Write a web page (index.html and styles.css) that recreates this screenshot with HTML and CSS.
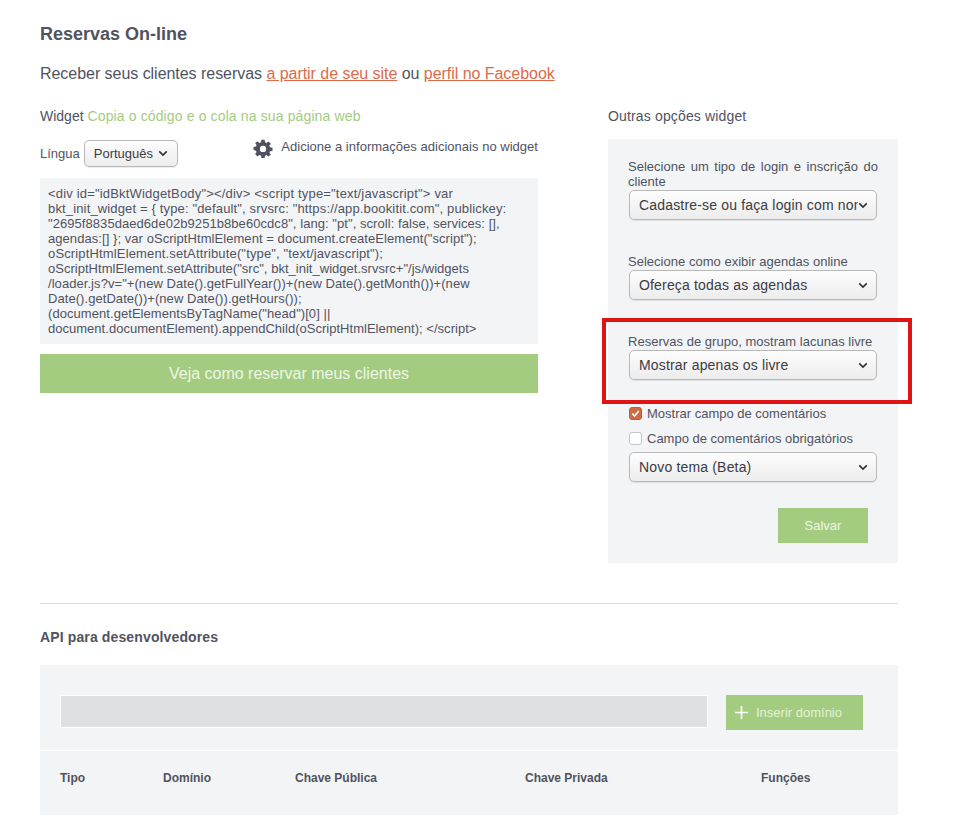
FILE: index.html
```html
<!DOCTYPE html>
<html lang="pt">
<head>
<meta charset="utf-8">
<title>Reservas On-line</title>
<link rel="stylesheet" href="styles.css">
</head>
<body>
<main class="page">
  <h1 class="title">Reservas On-line</h1>
  <p class="lead">Receber seus clientes reservas <a href="#">a partir de seu site</a> ou <a href="#">perfil no Facebook</a></p>
  <div class="columns">
    <section class="left">
      <div class="heading">Widget <span class="hint">Copia o código e o cola na sua página web</span></div>
      <div class="lang-row">
        <div class="lang">
          <span class="lang-label">Língua</span>
          <div class="select select-small"><span class="select-text">Português</span><svg class="chev" viewBox="0 0 12 8"><path d="M1.500 1.500 6 6l4.500-4.500" fill="none" stroke="#333" stroke-width="2"/></svg></div>
        </div>
        <div class="extra">
          <svg class="gear" viewBox="0 0 24 24"><path fill="#50535f" fill-rule="evenodd" d="M10 1h4l.6 3.100 1.800.8L19 3.100 21.900 6l-1.800 2.600.8 1.800L24 11v4l-3.100.6-.8 1.800 1.800 2.600L19 22l-2.600-1.800-1.800.8L14 24h-4l-.6-3.100-1.800-.8L5 22l-2.900-2.900 1.800-2.600-.8-1.800L0 14v-4l3.100-.6.8-1.800L2.100 5 5 3.100l2.600 1.800 1.800-.8zM12 8.500a4 4 0 1 0 0 8 4 4 0 0 0 0-8z"/></svg>
          <span class="extra-text">Adicione a informações adicionais no widget</span>
        </div>
      </div>
      <div class="code">
        <span class="line wider">&lt;div id="idBktWidgetBody"&gt;&lt;/div&gt; &lt;script type="text/javascript"&gt; var</span>
        <span class="line wide">bkt_init_widget = { type: "default", srvsrc: "https://app.bookitit.com", publickey:</span>
        <span class="line">"2695f8835daed6de02b9251b8be60cdc8", lang: "pt", scroll: false, services: [],</span>
        <span class="line">agendas:[] }; var oScriptHtmlElement = document.createElement("script");</span>
        <span class="line wide">oScriptHtmlElement.setAttribute("type", "text/javascript");</span>
        <span class="line tight">oScriptHtmlElement.setAttribute("src", bkt_init_widget.srvsrc+"/js/widgets</span>
        <span class="line">/loader.js?v="+(new Date().getFullYear())+(new Date().getMonth())+(new</span>
        <span class="line">Date().getDate())+(new Date()).getHours());</span>
        <span class="line">(document.getElementsByTagName("head")[0] ||</span>
        <span class="line tight">document.documentElement).appendChild(oScriptHtmlElement); &lt;/script&gt;</span>
      </div>
      <a class="preview" href="#">Veja como reservar meus clientes</a>
    </section>
    <aside class="right">
      <div class="heading heading-wide">Outras opções widget</div>
      <div class="panel">
        <div class="field">
          <label class="label justified">Selecione um tipo de login e inscrição do cliente</label>
          <div class="select"><span class="select-text">Cadastre-se ou faça login com nome</span><svg class="chev" viewBox="0 0 12 8"><path d="M1.500 1.500 6 6l4.500-4.500" fill="none" stroke="#333" stroke-width="2"/></svg></div>
        </div>
        <div class="field">
          <label class="label">Selecione como exibir agendas online</label>
          <div class="select"><span class="select-text">Ofereça todas as agendas</span><svg class="chev" viewBox="0 0 12 8"><path d="M1.500 1.500 6 6l4.500-4.500" fill="none" stroke="#333" stroke-width="2"/></svg></div>
        </div>
        <div class="field highlighted">
          <label class="label">Reservas de grupo, mostram lacunas livre</label>
          <div class="select"><span class="select-text">Mostrar apenas os livre</span><svg class="chev" viewBox="0 0 12 8"><path d="M1.500 1.500 6 6l4.500-4.500" fill="none" stroke="#333" stroke-width="2"/></svg></div>
        </div>
        <div class="check"><span class="box box-on"><svg viewBox="0 0 12 12"><path d="M2.500 6.200 5 8.700l4.500-5.400" fill="none" stroke="#fff" stroke-width="1.800"/></svg></span>Mostrar campo de comentários</div>
        <div class="check check-last"><span class="box"></span>Campo de comentários obrigatórios</div>
        <div class="select"><span class="select-text">Novo tema (Beta)</span><svg class="chev" viewBox="0 0 12 8"><path d="M1.500 1.500 6 6l4.500-4.500" fill="none" stroke="#333" stroke-width="2"/></svg></div>
        <div class="save-row"><a class="save" href="#">Salvar</a></div>
      </div>
    </aside>
  </div>
  <hr class="rule">
  <h2 class="api-title">API para desenvolvedores</h2>
  <section class="api">
    <div class="api-form">
      <div class="domain-input"></div>
      <a class="add" href="#"><svg class="plus" viewBox="0 0 16 16"><path d="M8 1v14M1 8h14" stroke="#fff" stroke-width="1.800" fill="none"/></svg>Inserir domínio</a>
    </div>
    <div class="api-head">
      <span class="col-type">Tipo</span>
      <span class="col-domain">Domínio</span>
      <span class="col-public">Chave Pública</span>
      <span class="col-private">Chave Privada</span>
      <span>Funções</span>
    </div>
  </section>
</main>
</body>
</html>
```
FILE: styles.css
```css
* { box-sizing: border-box; }
html, body { margin: 0; background: #fff; }
body { font-family: "Liberation Sans", Arial, sans-serif; color: #50535f; overflow: hidden; height: 836px; }
.page { width: 858px; margin-left: 40px; padding-top: 24px; }
.title { margin: 0; font-size: 18px; line-height: 20px; font-weight: bold; color: #50535f; }
.lead { margin: 20px 0 0; font-size: 16px; line-height: 20px; letter-spacing: -.04px; }
.lead a { color: #dd6a4a; text-decoration: underline; }
.columns { display: flex; justify-content: space-between; margin-top: 22px; }
.left { width: 498px; }
.right { width: 290px; }
.heading { font-size: 14px; line-height: 20px; color: #50535f; }
.heading-wide { letter-spacing: .15px; }
.hint { color: #a3cc80; letter-spacing: .13px; }
.lang-row { display: flex; justify-content: space-between; align-items: flex-start; margin-top: 14px; height: 38px; }
.lang { display: flex; align-items: center; font-size: 13px; gap: 4px; }
.lang-label { font-size: 13px; }
.extra { display: flex; align-items: center; font-size: 13px; gap: 8px; line-height: 16px; margin-top: -1px; }
.extra-text { margin-top: -4px; letter-spacing: .02px; }
.gear { width: 20px; height: 19px; }
.select { display: flex; align-items: center; justify-content: space-between; height: 30px; width: 248px; padding: 0 8px 0 9px; border: 1px solid #b9b9b9; border-radius: 5px; background: linear-gradient(#fdfdfd, #ececec); color: #3c3c44; font-size: 14px; letter-spacing: .17px; box-shadow: 0 1px 1px rgba(0,0,0,.08); }
.select-small { width: 94px; height: 27px; padding-right: 9px; font-size: 13px; letter-spacing: 0; }
.select-text { flex: 1; min-width: 0; white-space: nowrap; overflow: hidden; }
.chev { width: 10px; height: 7px; flex: none; }
.select-small .chev { margin-left: 4px; }
.code { height: 166px; padding: 8px; background: #f3f4f6; font-size: 13px; line-height: 15px; color: #50535f; }
.line { display: block; white-space: nowrap; letter-spacing: .06px; }
.wider { letter-spacing: .18px; }
.wide { letter-spacing: .15px; }
.tight { letter-spacing: .02px; }
.preview { display: block; margin-top: 10px; height: 39px; line-height: 39px; text-align: center; background: #a3cc80; color: #eef6e6; font-size: 16px; text-decoration: none; }
.right .heading { margin-bottom: 13px; }
.panel { height: 424px; background: #f3f4f6; padding: 20px 21px 0 21px; }
.field { position: relative; margin-bottom: 34px; }
.label { display: block; margin: 0 -1px; font-size: 13px; line-height: 15px; padding-bottom: 1px; letter-spacing: .02px; }
.justified { text-align: justify; }
.highlighted { margin-bottom: 0; height: 72px; }
.highlighted::before { content: ""; box-sizing: border-box; position: absolute; left: -27px; top: -16px; width: 310px; height: 86px; border: 4px solid #e01414; pointer-events: none; }
.check { display: flex; align-items: center; font-size: 13px; line-height: 15px; height: 15px; margin-bottom: 10px; }
.check-last { margin-bottom: 6px; }
.box { width: 13px; height: 13px; margin-right: 5px; border: 1px solid #c6c6c6; border-radius: 3px; background: #fff; display: block; flex: none; }
.box-on { background: #cf6a41; border-color: #bb5f3a; }
.box-on svg { display: block; width: 11px; height: 11px; }
.save-row { display: flex; justify-content: flex-end; margin-top: 26px; padding-right: 9px; }
.save { display: block; width: 90px; height: 35px; line-height: 35px; text-align: center; background: #a3cc80; color: #eef6e6; font-size: 13px; text-decoration: none; }
.rule { border: 0; border-top: 1px solid #dddddd; margin: 40px 0 0; }
.api-title { margin: 24px 0 0; font-size: 14px; line-height: 18px; font-weight: bold; color: #50535f; letter-spacing: .13px; }
.api { margin-top: 19px; height: 150px; background: #f3f4f6; }
.api-form { display: flex; align-items: flex-start; padding: 30px 0 0 20px; height: 86px; border-bottom: 1px solid #fff; }
.domain-input { width: 648px; height: 33px; background: #dee0e2; border: 1px solid #fff; }
.add { display: flex; align-items: center; margin-left: 18px; width: 137px; height: 35px; padding-left: 8px; background: #a3cc80; color: #e4f2d8; font-size: 13px; text-decoration: none; }
.plus { width: 15px; height: 15px; margin-right: 7px; }
.api-head { display: flex; padding: 19px 0 0 20px; font-size: 12px; line-height: 16px; font-weight: bold; color: #50535f; }
.col-type { width: 103px; }
.col-domain { width: 132px; }
.col-public { width: 230px; }
.col-private { width: 236px; }
```
